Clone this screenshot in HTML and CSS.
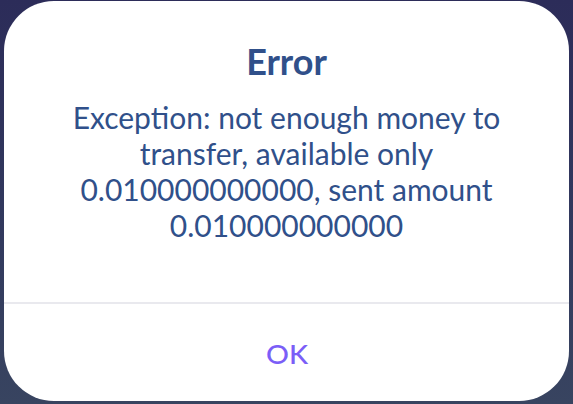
FILE: index.html
```html
<!DOCTYPE html>
<html>
<head>
<meta charset="utf-8">
<link rel="stylesheet" href="styles.css">
</head>
<body>
<div class="backdrop">
  <div class="dialog">
    <div class="dialog-body">
      <h1 class="dialog-title">Error</h1>
      <p class="dialog-message">Exception: not enough money to transfer, available only 0.010000000000, sent amount 0.010000000000</p>
    </div>
    <div class="dialog-footer">
      <button class="dialog-button"><span class="dialog-button-label">OK</span></button>
    </div>
  </div>
</div>
</body>
</html>
```
FILE: styles.css
```css
html, body {
  margin: 0;
  padding: 0;
  height: 100%;
}
body {
  background: linear-gradient(180deg, #2c2c59 0%, #323a5e 60%, #384460 100%);
  font-family: Lato, "Noto Sans", sans-serif;
}
.backdrop {
  padding: 1px 4px 0 4px;
  height: 403px;
  box-sizing: border-box;
}
.dialog {
  background: #ffffff;
  border-radius: 50px;
  height: 400px;
  display: flex;
  flex-direction: column;
  overflow: hidden;
}
.dialog-body {
  flex: 1;
  padding: 40px 36px 0;
  text-align: center;
  color: #30508a;
}
.dialog-title {
  margin: 0;
  font-size: 36px;
  line-height: 40px;
  font-weight: 700;
}
.dialog-message {
  margin: 18px 0 0;
  font-size: 30px;
  line-height: 36px;
  font-weight: 400;
}
.dialog-footer {
  height: 97px;
  border-top: 2px solid #e9e9ee;
  display: flex;
  align-items: center;
  justify-content: center;
}
.dialog-button {
  background: none;
  border: none;
  padding: 8px 20px;
  margin-left: 1px;
  margin-top: 3px;
}
.dialog-button-label {
  display: inline-block;
  font-family: Lato, "Open Sans", sans-serif;
  font-size: 26px;
  line-height: 30px;
  font-weight: 500;
  color: #7b5ef7;
  transform: scaleX(1.1);
}
```
